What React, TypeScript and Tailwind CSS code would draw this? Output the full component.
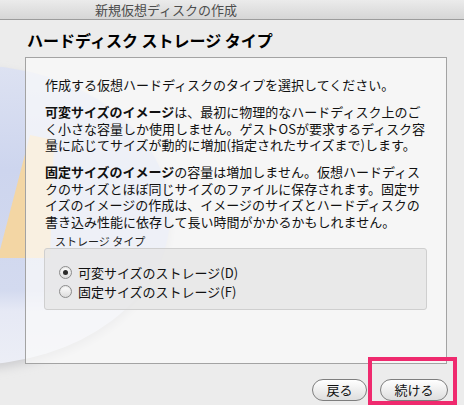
import React from 'react';

const font = "font-['Noto_Sans_CJK_JP','Noto_Sans',sans-serif]";

function Watermark() {
  return (
    <svg
      className="absolute left-0 top-0"
      width="260"
      height="405"
      viewBox="0 0 260 405"
    >
      <defs>
        <linearGradient id="wm" x1="0" y1="0" x2="0" y2="1">
          <stop offset="0" stopColor="#dde2f2" />
          <stop offset="0.35" stopColor="#cdd5ee" />
          <stop offset="0.75" stopColor="#d3daef" />
          <stop offset="0.82" stopColor="#e6e9f5" />
          <stop offset="1" stopColor="#eceef6" />
        </linearGradient>
        <filter id="blur" x="-20%" y="-20%" width="140%" height="140%">
          <feGaussianBlur stdDeviation="5" />
        </filter>
      </defs>
      <ellipse cx="-30" cy="220" rx="200" ry="150" fill="#cfcfd2" filter="url(#blur)" />
      <ellipse cx="-30" cy="215" rx="200" ry="150" fill="url(#wm)" />
      <polygon points="30,135 0,250 0,258 50,258 54,140" fill="#f3d6a4" />
    </svg>
  );
}

function Radio({ checked, label }: { checked?: boolean; label: string }) {
  return (
    <div className="flex items-center h-[19px] gap-[6px]">
      <span className="w-[13px] h-[13px] rounded-full border border-[#8c8c8c] bg-gradient-to-b from-white to-[#dcdcdc] flex items-center justify-center shadow-[inset_0_1px_1px_rgba(0,0,0,0.1)]">
        {checked && <span className="w-[5px] h-[5px] rounded-full bg-[#2a2a2a]" />}
      </span>
      <span className="text-[13px] leading-[19px] text-[#111]">{label}</span>
    </div>
  );
}

export default function App() {
  return (
    <div className={`relative w-[464px] h-[405px] overflow-hidden bg-[#ececec] ${font}`}>
      <Watermark />
      <div className="relative">
        {/* Title bar */}
        <div className="h-[20px] border-b border-[#9c9c9c] bg-gradient-to-b from-[#ebebeb] to-[#d6d6d6] pl-[95px] text-[13px] leading-[19px] text-[#4d4d4d]">
          新規仮想ディスクの作成
        </div>

        {/* Heading */}
        <h1 className="mt-[10px] pl-[27px] text-[16px] leading-[20px] font-bold text-black">
          ハードディスク ストレージ タイプ
        </h1>

        {/* Panel */}
        <div className="mt-[7px] ml-[25px] w-[422px] h-[307px] border border-[#a3a3a3] bg-[#fbfbfb]/70 pl-[19px] pt-[19px] text-[13px] leading-[16.5px] text-[#111]">
          <p className="whitespace-nowrap">作成する仮想ハードディスクのタイプを選択してください。</p>
          <p className="mt-[10.5px] whitespace-nowrap">
            <b>可変サイズのイメージ</b>は、最初に物理的なハードディスク上のご
            <br />
            く小さな容量しか使用しません。ゲストOSが要求するディスク容
            <br />
            量に応じてサイズが動的に増加(指定されたサイズまで)します。
          </p>
          <p className="mt-[10.5px] whitespace-nowrap">
            <b>固定サイズのイメージ</b>の容量は増加しません。仮想ハードディス
            <br />
            クのサイズとほぼ同じサイズのファイルに保存されます。固定サ
            <br />
            イズのイメージの作成は、イメージのサイズとハードディスクの
            <br />
            書き込み性能に依存して長い時間がかかるかもしれません。
          </p>
          <div className="mt-[4px] ml-[10px] text-[11px] leading-[14px] text-[#222]">ストレージ タイプ</div>
          <div className="ml-[-1px] w-[383px] h-[62px] rounded-[3px] border border-[#cfcfcf] bg-[#e6e6e6]/80 pl-[14px] pt-[14px]">
            <Radio checked label="可変サイズのストレージ(D)" />
            <Radio label="固定サイズのストレージ(F)" />
          </div>
        </div>

        {/* Buttons */}
        <div className="mt-[15px] flex justify-end gap-[13px] pr-[16px]">
          <button className="w-[55px] h-[22px] rounded-full border border-[#7e7e7e] bg-gradient-to-b from-white to-[#dedede] text-[13px] leading-[20px] text-[#111]">
            戻る
          </button>
          <button className="w-[68px] h-[22px] rounded-full border border-[#7e7e7e] bg-gradient-to-b from-white to-[#dedede] text-[13px] leading-[20px] text-[#111]">
            続ける
          </button>
        </div>
      </div>

      {/* Annotation highlight */}
      <div className="absolute left-[368px] top-[357px] w-[89px] h-[48px] border-[4px] border-[#ef2a6e]" />
    </div>
  );
}
